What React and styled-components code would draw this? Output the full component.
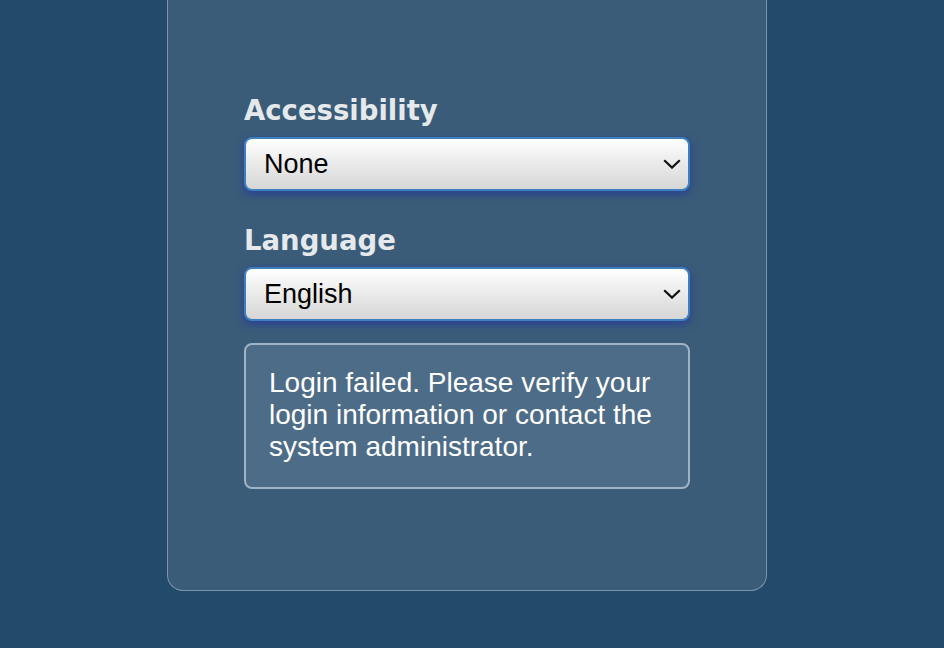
import React from "react";
import styled, { createGlobalStyle } from "styled-components";

const GlobalStyle = createGlobalStyle`
  html, body {
    margin: 0;
    padding: 0;
    background: #214a6b;
  }
  body {
    font-family: "Liberation Sans", Arial, sans-serif;
  }
`;

const Page = styled.div`
  box-sizing: border-box;
  width: 944px;
  height: 648px;
  overflow: hidden;
  display: flex;
  justify-content: flex-start;
  padding-left: 167px;
  background: #214a6b;
`;

const Card = styled.div`
  box-sizing: border-box;
  width: 600px;
  height: 591px;
  padding: 94px 76px 0;
  background: #3a5c78;
  border: 1px solid #7c95aa;
  border-top: none;
  border-radius: 0 0 16px 16px;
  display: flex;
  flex-direction: column;
`;

const Label = styled.label`
  display: block;
  font-family: "DejaVu Sans", Verdana, sans-serif;
  font-weight: bold;
  font-size: 27.5px;
  line-height: 32px;
  color: #e6e9ec;
  margin: ${(p) => (p.$first ? "0" : "33px")} 0 11px;
`;

const SelectWrap = styled.div`
  position: relative;
  height: 54px;
  border-radius: 8px;
  box-shadow: 0 3px 8px rgba(35, 55, 160, 0.8);
`;

const Select = styled.select`
  appearance: none;
  -webkit-appearance: none;
  box-sizing: border-box;
  width: 100%;
  height: 54px;
  margin: 0;
  padding: 0 50px 0 18px;
  border: 2px solid #3d7fbf;
  border-radius: 8px;
  background: linear-gradient(#ffffff 0%, #f0f0f0 35%, #d6d6d6 100%);
  font-family: "Liberation Sans", Arial, sans-serif;
  font-size: 27px;
  color: #000;
  outline: none;
`;

const Chevron = styled.svg`
  position: absolute;
  right: 9px;
  top: 50%;
  margin-top: -5px;
  width: 18px;
  height: 10px;
  pointer-events: none;
`;

const Message = styled.div`
  box-sizing: border-box;
  margin-top: 22px;
  height: 146px;
  padding: 22px 20px 0 23px;
  background: #4d6c87;
  border: 2px solid #a0b3c4;
  border-radius: 8px;
  color: #ffffff;
  font-family: "Liberation Sans", Arial, sans-serif;
  font-size: 28px;
  line-height: 32px;
`;

function Dropdown({ id, value, options }) {
  return (
    <SelectWrap>
      <Select id={id} defaultValue={value}>
        {options.map((o) => (
          <option key={o}>{o}</option>
        ))}
      </Select>
      <Chevron viewBox="0 0 18 10">
        <path d="M1.2 1.2 L9 8.6 L16.8 1.2" fill="none" stroke="#111" strokeWidth="2.2" />
      </Chevron>
    </SelectWrap>
  );
}

export default function App() {
  return (
    <>
      <GlobalStyle />
      <Page>
        <Card>
          <Label $first htmlFor="access">Accessibility</Label>
          <Dropdown id="access" value="None" options={["None", "Screen reader", "High contrast"]} />
          <Label htmlFor="lang">Language</Label>
          <Dropdown id="lang" value="English" options={["English", "Deutsch", "Français", "Español"]} />
          <Message>
            Login failed. Please verify your login information or contact the system administrator.
          </Message>
        </Card>
      </Page>
    </>
  );
}
